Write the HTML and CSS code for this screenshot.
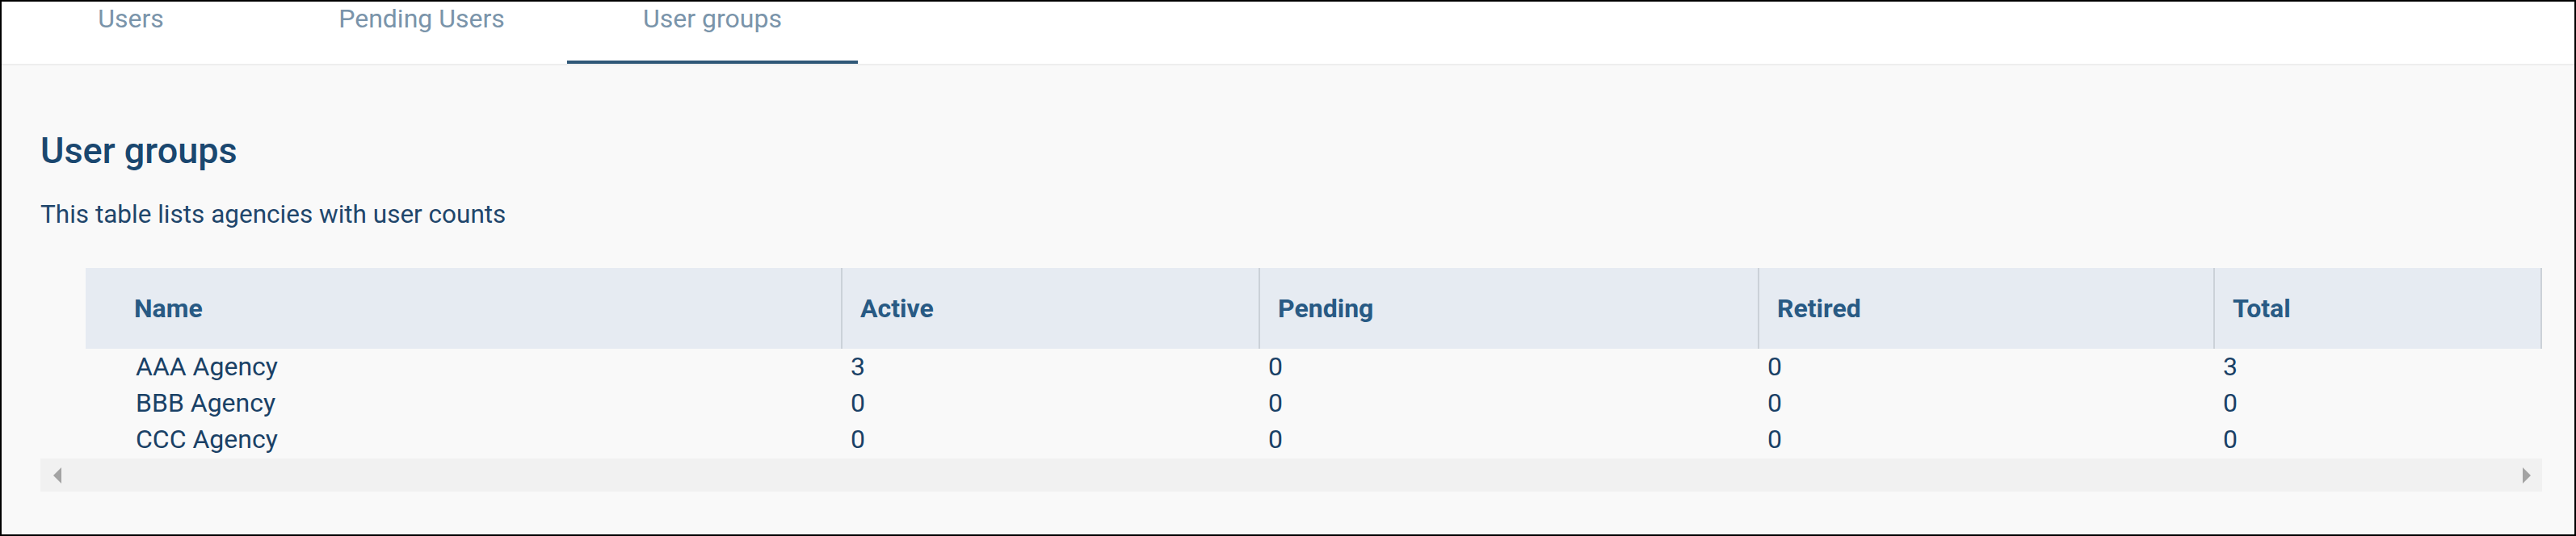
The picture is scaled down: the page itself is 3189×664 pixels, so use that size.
FILE: index.html
```html
<!DOCTYPE html>
<html lang="en">
<head>
<meta charset="utf-8">
<title>User groups</title>
<link rel="stylesheet" href="styles.css">
</head>
<body>
<div class="frame">
  <nav class="tabs">
    <div class="tab-list">
      <a class="tab">Users</a>
      <a class="tab">Pending Users</a>
      <a class="tab active">User groups</a>
    </div>
  </nav>
  <main class="content">
    <h1 class="title">User groups</h1>
    <p class="desc">This table lists agencies with user counts</p>
    <div class="table-wrap">
      <div class="table-viewport">
        <table class="grid">
          <colgroup>
            <col class="c-name">
            <col class="c-active">
            <col class="c-pending">
            <col class="c-retired">
            <col class="c-total">
            <col class="c-extra">
          </colgroup>
          <thead>
            <tr>
              <th>Name</th>
              <th>Active</th>
              <th>Pending</th>
              <th>Retired</th>
              <th>Total</th>
              <th></th>
            </tr>
          </thead>
          <tbody>
            <tr><td>AAA Agency</td><td>3</td><td>0</td><td>0</td><td>3</td><td></td></tr>
            <tr><td>BBB Agency</td><td>0</td><td>0</td><td>0</td><td>0</td><td></td></tr>
            <tr><td>CCC Agency</td><td>0</td><td>0</td><td>0</td><td>0</td><td></td></tr>
          </tbody>
        </table>
      </div>
      <div class="hscroll">
        <span class="arrow arrow-left"></span>
        <span class="arrow arrow-right"></span>
      </div>
    </div>
  </main>
</div>
</body>
</html>
```

FILE: styles.css
```css
html, body {
  margin: 0;
  padding: 0;
}

body {
  font-family: Roboto, "Liberation Sans", sans-serif;
}

.frame {
  box-sizing: border-box;
  width: 3189px;
  height: 664px;
  border: 2px solid #000;
  background: #f9f9f9;
  overflow: hidden;
}

/* Tabs */
.tabs {
  height: 77px;
  background: #fff;
  border-bottom: 2px solid #eeeeee;
  overflow: hidden;
}

.tab-list {
  display: flex;
  height: 100%;
  margin-left: -20px;
}

.tab {
  position: relative;
  box-sizing: border-box;
  width: 360px;
  height: 100%;
  padding-top: 2px;
  text-align: center;
  font-size: 32px;
  line-height: 38px;
  color: #7a94aa;
  cursor: pointer;
}

.tab.active::after {
  content: "";
  position: absolute;
  left: 0;
  right: 0;
  bottom: 0;
  height: 4px;
  background: #2f5878;
}

/* Content */
.content {
  padding: 79px 40px 0 48px;
}

.title {
  margin: 0;
  font-size: 45px;
  line-height: 53px;
  font-weight: 500;
  color: #1a476f;
}

.desc {
  margin: 34px 0 0;
  font-size: 31.5px;
  line-height: 38px;
  color: #1f466b;
}

.table-wrap {
  margin-top: 47px;
}

.table-viewport {
  overflow: hidden;
  padding-left: 56px;
}

.grid {
  border-collapse: separate;
  border-spacing: 0;
  table-layout: fixed;
  width: 3339px;
}

.c-name { width: 935px; }
.c-active { width: 517px; }
.c-pending { width: 618px; }
.c-retired { width: 564px; }
.c-total { width: 405px; }
.c-extra { width: 300px; }

.grid th {
  height: 100px;
  padding: 0 0 0 22px;
  background: #e6ebf2;
  border-left: 2px solid #cbd1d8;
  text-align: left;
  vertical-align: middle;
  font-size: 32px;
  font-weight: 700;
  color: #285a84;
  white-space: nowrap;
}

.grid th:first-child {
  border-left: none;
  padding-left: 60px;
}

.grid td {
  height: 45px;
  padding: 0 0 0 12px;
  font-size: 32px;
  line-height: 45px;
  color: #1a4166;
  white-space: nowrap;
}

.grid td:first-child {
  padding-left: 62px;
}

/* Horizontal scrollbar */
.hscroll {
  box-sizing: border-box;
  height: 41px;
  margin-top: 1px;
  padding: 0 14px 0 16px;
  background: #f1f1f1;
  display: flex;
  align-items: center;
  justify-content: space-between;
}

.arrow {
  width: 0;
  height: 0;
  border-top: 10px solid transparent;
  border-bottom: 10px solid transparent;
}

.arrow-left {
  border-right: 10px solid #a3a3a3;
}

.arrow-right {
  border-left: 10px solid #a3a3a3;
}
```
